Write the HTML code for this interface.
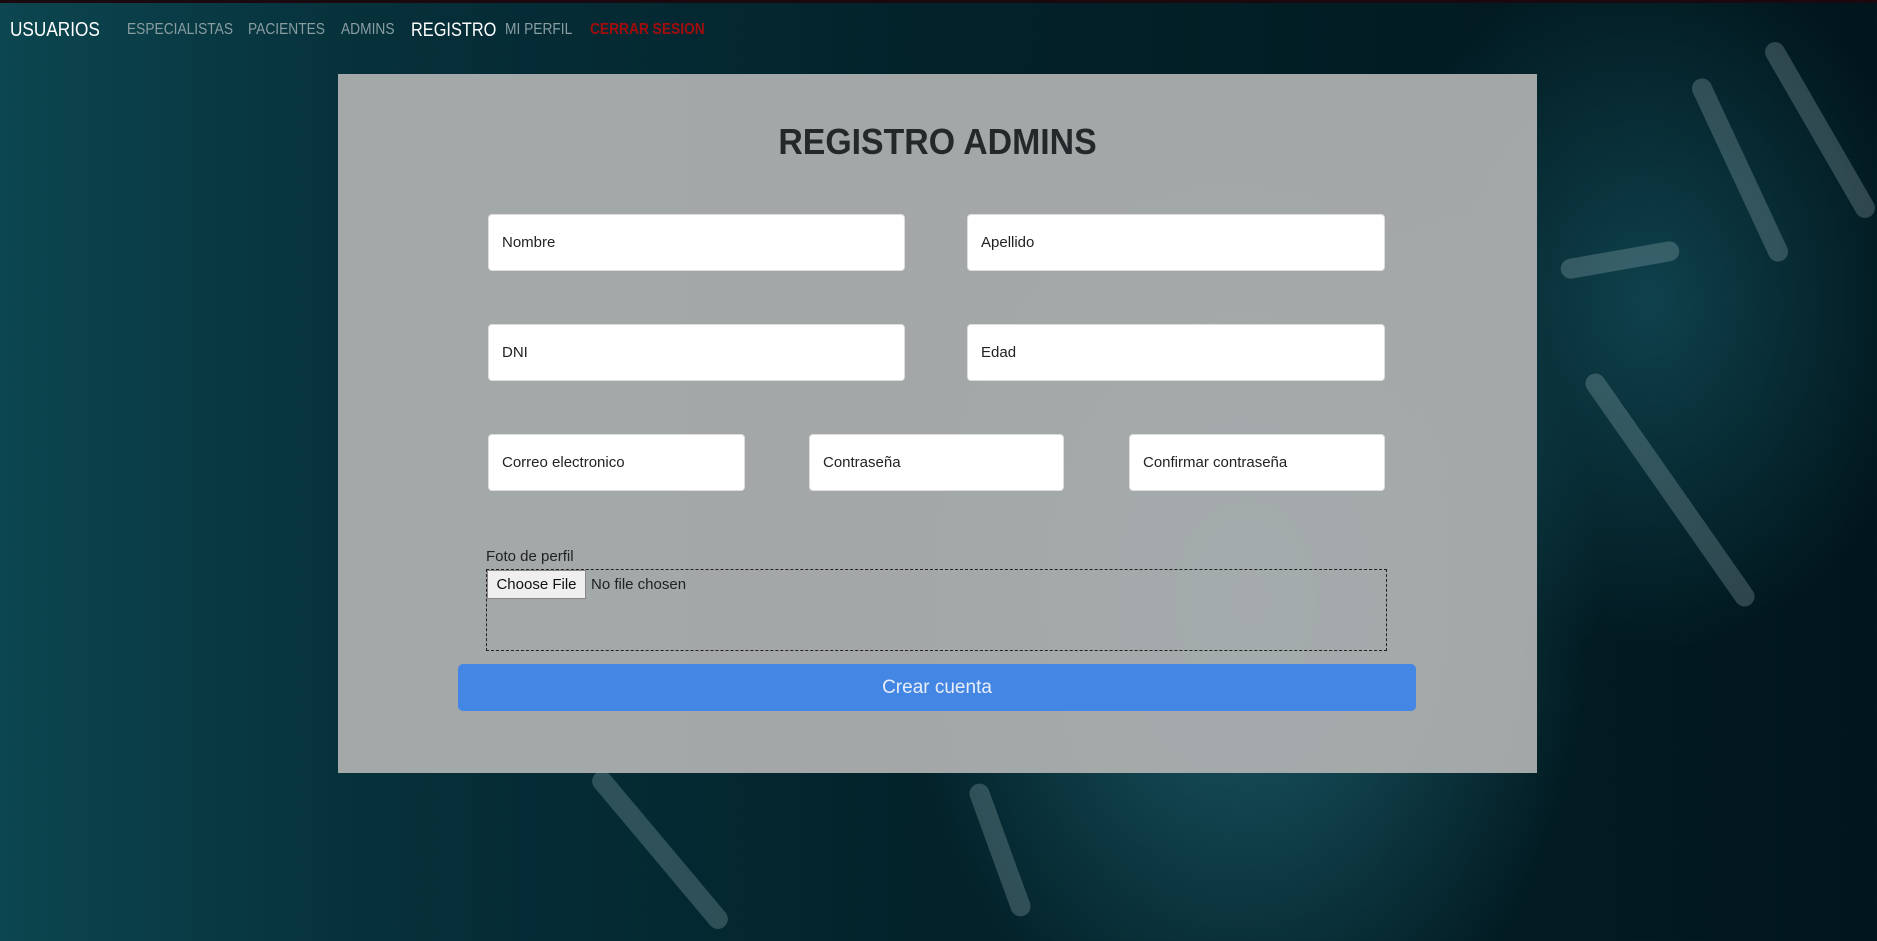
<!DOCTYPE html>
<html style="overflow:hidden;width:1877px;height:941px"><head><meta charset="utf-8"><style>
*{box-sizing:border-box;margin:0;padding:0}
body{width:1877px;height:941px;overflow:hidden;font-family:"Liberation Sans",sans-serif;
background:radial-gradient(ellipse 500px 700px at 1250px 600px,rgba(60,170,190,.45),transparent 70%),radial-gradient(ellipse 400px 500px at 1650px 300px,rgba(40,140,160,.35),transparent 70%),linear-gradient(90deg,#0c4650 0%,#06303a 20%,#03222a 50%,#021b22 80%,#01161c 100%);position:relative}
.topline{position:absolute;left:0;top:0;width:1877px;height:3px;background:#1a0a10}
.nav span{position:absolute;top:21px;font-size:16px;color:#8a9ea2;transform:scaleX(.86);transform-origin:left;white-space:nowrap}
.bar{position:absolute;height:20px;border-radius:10px;background:rgba(200,225,228,.22)}
.panel{position:absolute;left:338px;top:74px;width:1199px;height:699px;background:rgba(175,178,178,.93)}
h1{position:absolute;left:338px;top:121px;width:1199px;text-align:center;font-size:36px;color:#24282b;font-weight:bold;transform:scaleX(.94)}
.in{position:absolute;background:#fff;border:1px solid #ddd;border-radius:4px;font-size:15px;color:#222;padding-left:13px;display:flex;align-items:center}
</style></head><body>
<div class="topline"></div>
<div class="bar" style="left:1640px;top:160px;width:200px;transform:rotate(65deg)"></div>
<div class="bar" style="left:1720px;top:120px;width:200px;transform:rotate(60deg)"></div>
<div class="bar" style="left:1530px;top:480px;width:280px;transform:rotate(55deg)"></div>
<div class="bar" style="left:1560px;top:250px;width:120px;transform:rotate(-10deg)"></div>
<div class="bar" style="left:560px;top:840px;width:200px;transform:rotate(50deg)"></div>
<div class="bar" style="left:930px;top:840px;width:140px;transform:rotate(70deg)"></div>
<div class="nav">
<span style="left:10px;top:19px;font-size:20px;color:#fff">USUARIOS</span>
<span style="left:127px">ESPECIALISTAS</span>
<span style="left:248px">PACIENTES</span>
<span style="left:341px">ADMINS</span>
<span style="left:411px;top:20px;font-size:19px;color:#fff">REGISTRO</span>
<span style="left:505px">MI PERFIL</span>
<span style="left:590px;color:#a30d0d;font-weight:bold">CERRAR SESION</span>
</div>
<div class="panel"></div>
<h1>REGISTRO ADMINS</h1>
<div class="in" style="left:488px;top:214px;width:417px;height:57px">Nombre</div>
<div class="in" style="left:967px;top:214px;width:418px;height:57px">Apellido</div>
<div class="in" style="left:488px;top:324px;width:417px;height:57px">DNI</div>
<div class="in" style="left:967px;top:324px;width:418px;height:57px">Edad</div>
<div class="in" style="left:488px;top:434px;width:257px;height:57px">Correo electronico</div>
<div class="in" style="left:809px;top:434px;width:255px;height:57px">Contraseña</div>
<div class="in" style="left:1129px;top:434px;width:256px;height:57px">Confirmar contraseña</div>
<div style="position:absolute;left:486px;top:548px;font-size:15px;color:#222">Foto de perfil</div>
<div style="position:absolute;left:486px;top:569px;width:901px;height:82px;border:1px dashed #222"></div>
<div style="position:absolute;left:487px;top:570px;width:99px;height:29px;background:#efefef;border:1px solid #888;font-size:15px;color:#111;display:flex;align-items:center;justify-content:center">Choose File</div>
<div style="position:absolute;left:591px;top:576px;font-size:15px;color:#222">No file chosen</div>
<div style="position:absolute;left:458px;top:664px;width:958px;height:47px;background:#4486e4;border-radius:5px;color:#e8eef8;font-size:19px;display:flex;align-items:center;justify-content:center">Crear cuenta</div>
</body></html>
